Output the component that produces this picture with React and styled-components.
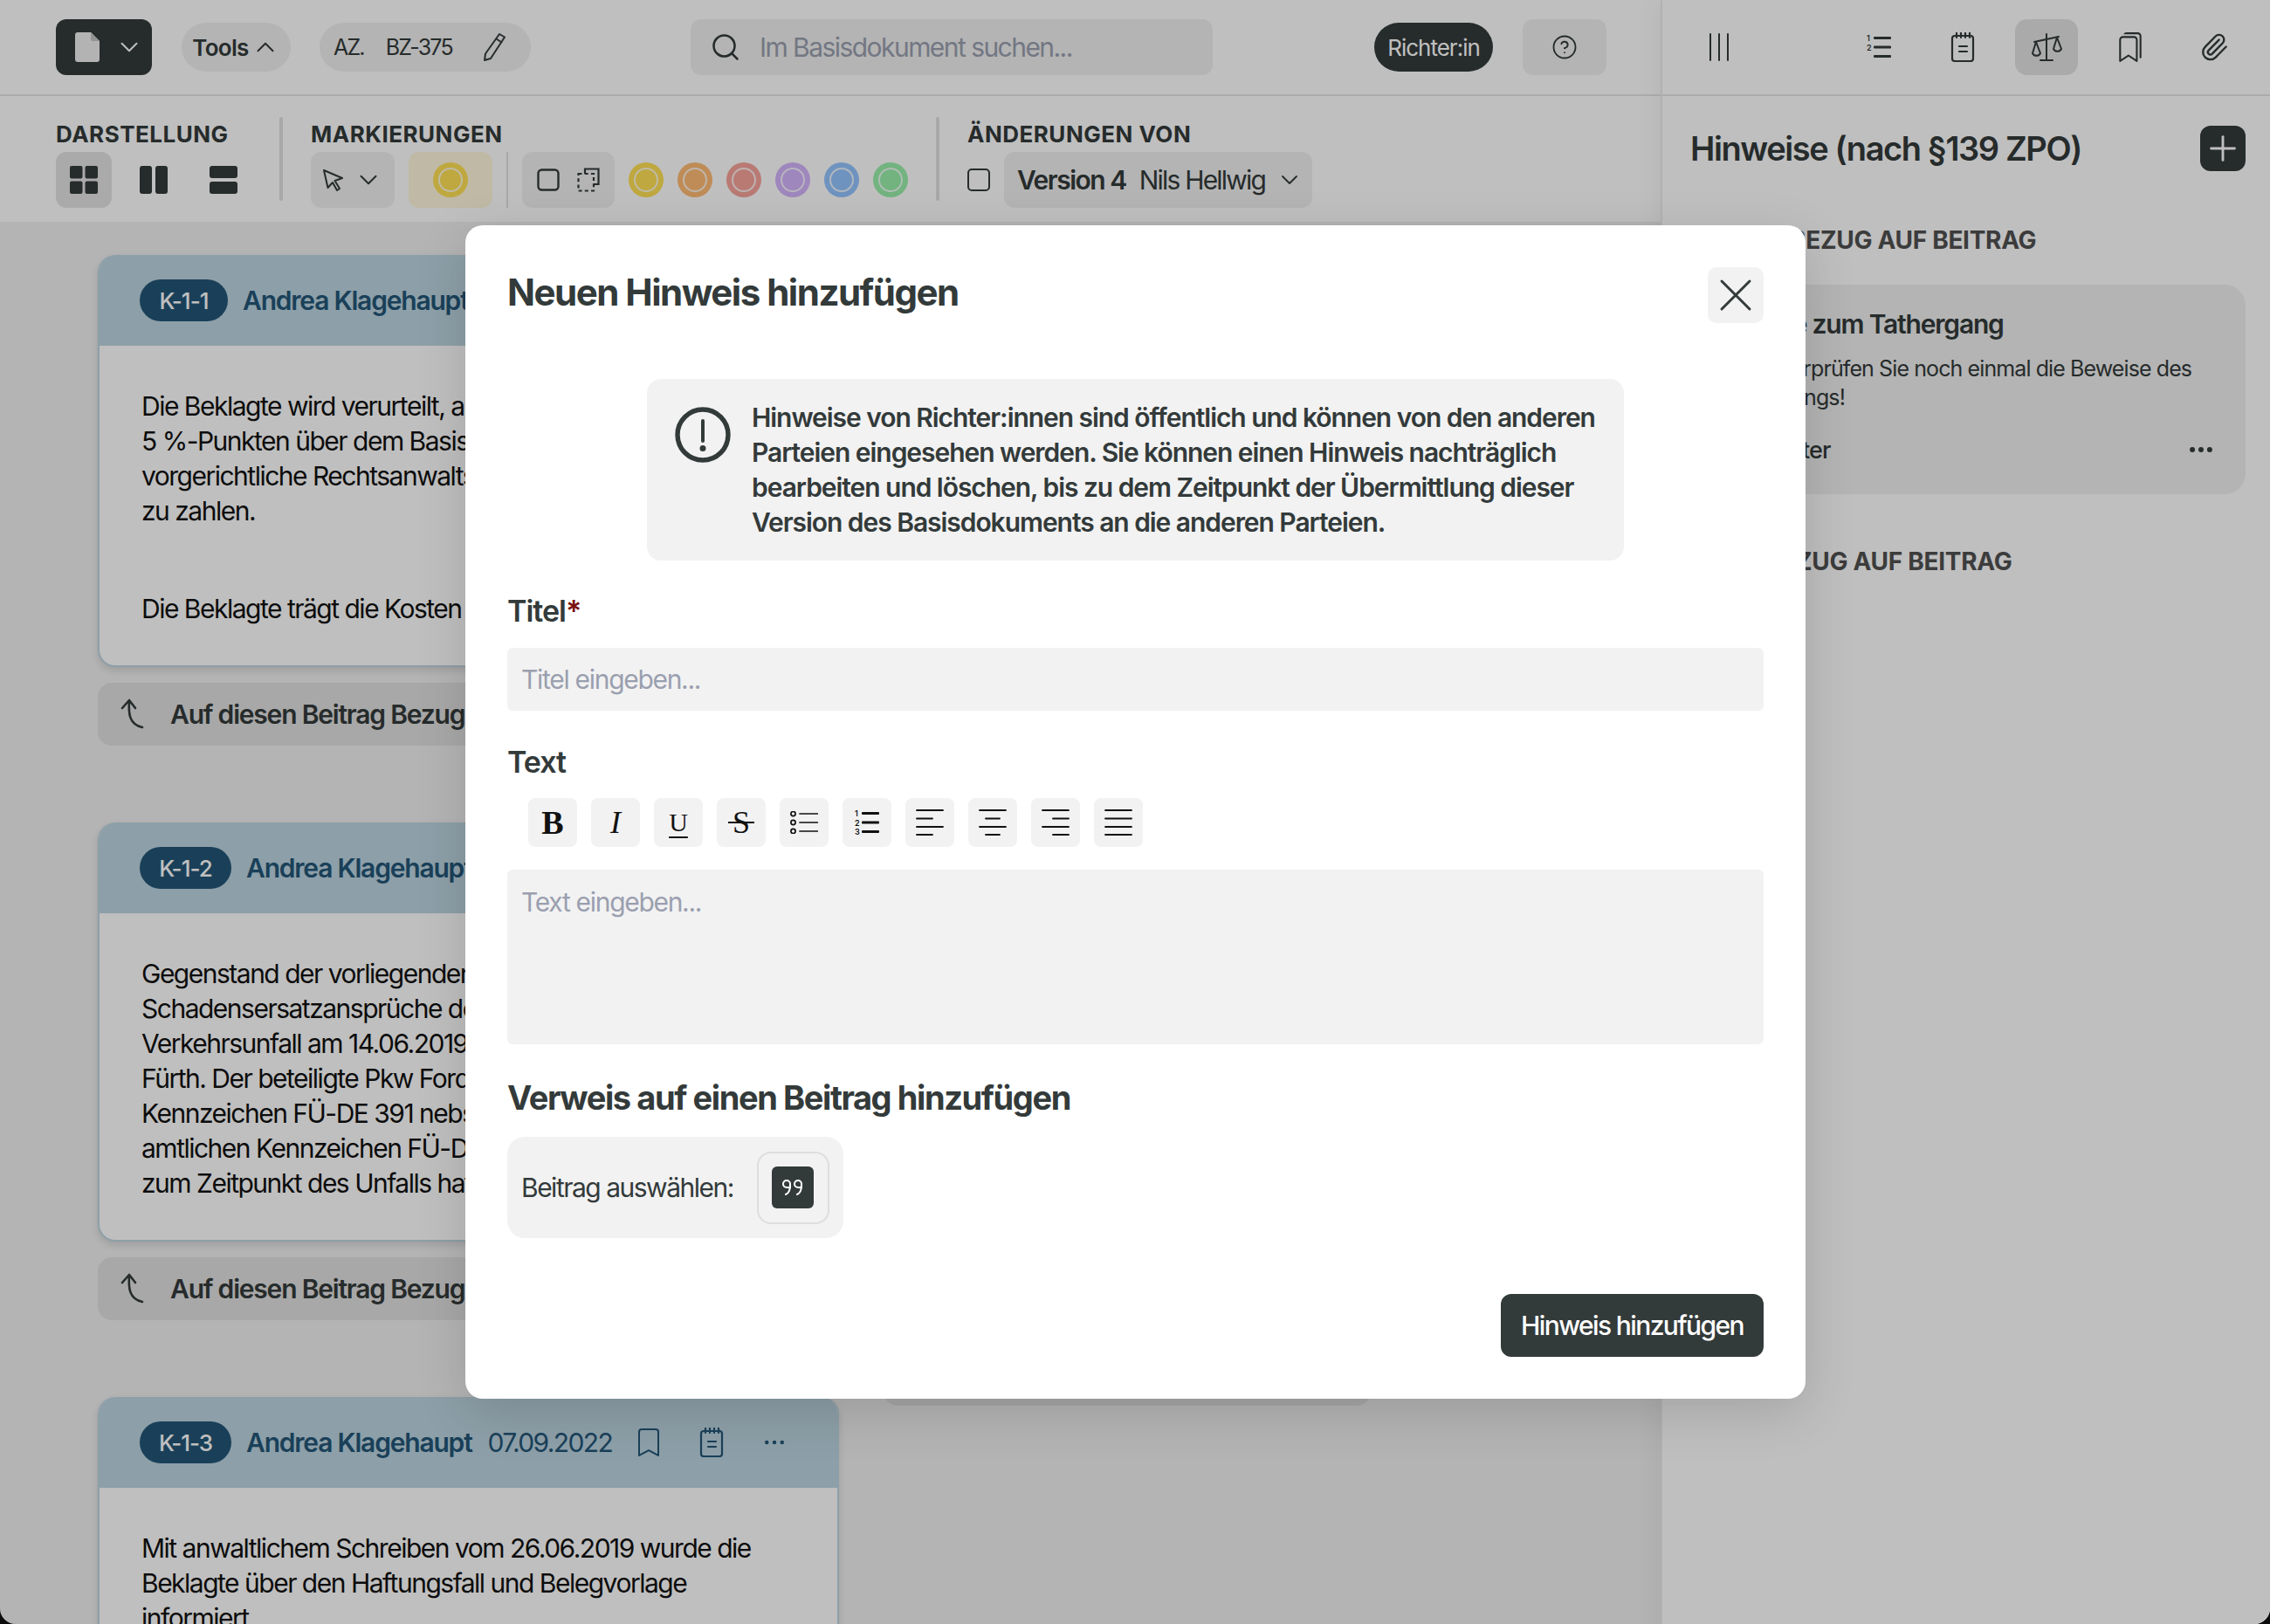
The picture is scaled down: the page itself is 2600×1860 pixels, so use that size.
import React from "react";
import styled, { createGlobalStyle } from "styled-components";
import { ChevronDown, ChevronUp, Search, CircleHelp, Plus, X, Ellipsis, Paperclip } from "lucide-react";
import { BsBookmark, BsBookmarks } from "react-icons/bs";

const GlobalStyle = createGlobalStyle`
  html, body {
    margin: 0;
    background: #0c0c0c;
  }
  body {
    font-family: "Inter", "Noto Sans", sans-serif;
    color: #333a3a;
    letter-spacing: -1px;
  }
  * { box-sizing: border-box; }
`;

const Page = styled.div`
  position: relative;
  width: 2600px;
  height: 1860px;
  overflow: hidden;
  background: #f0f0f0;
  border-radius: 0 0 18px 18px;
  display: grid;
  grid-template-columns: 1902px 698px;
`;

const LeftPane = styled.div`
  display: flex;
  flex-direction: column;
  min-width: 0;
`;

const TopBar = styled.header`
  height: 110px;
  background: #fff;
  border-bottom: 2px solid #e6e6e6;
  display: flex;
  align-items: center;
  padding-left: 64px;
`;

const LogoButton = styled.button`
  width: 110px;
  height: 64px;
  border: 0;
  border-radius: 12px;
  background: #333a3a;
  color: #fff;
  display: flex;
  align-items: center;
  padding: 0 0 0 22px;
  gap: 17px;
  svg { flex: none; }
`;

const ToolsPill = styled.button`
  width: 125px;
  height: 56px;
  margin-left: 34px;
  border: 0;
  padding: 0;
  border-radius: 28px;
  background: #f0f0f0;
  color: #333a3a;
  font: 600 26px "Inter", sans-serif;
  letter-spacing: -0.7px;
  display: flex;
  align-items: center;
  justify-content: center;
  gap: 2px;
  svg { flex: none; }
`;

const CasePill = styled.div`
  width: 242px;
  height: 56px;
  margin-left: 33px;
  border-radius: 28px;
  background: #f0f0f0;
  font-size: 25px;
  letter-spacing: -1.8px;
  white-space: nowrap;
  display: flex;
  align-items: center;
  padding-left: 16px;
  gap: 25px;
`;

const CaseEdit = styled.span`
  display: flex;
  margin-left: 8px;
`;

const SearchBox = styled.div`
  width: 598px;
  height: 64px;
  margin-left: 183px;
  border-radius: 12px;
  background: #f0f0f0;
  display: flex;
  align-items: center;
  padding-left: 22px;
  gap: 21px;
`;

const SearchInput = styled.input`
  flex: 1;
  min-width: 0;
  border: 0;
  outline: 0;
  padding: 0;
  background: transparent;
  font: 400 30px "Inter", sans-serif;
  letter-spacing: -1.55px;
  color: #333a3a;
  &::placeholder { color: #9a9faf; opacity: 1; }
`;

const RoleBadge = styled.div`
  width: 136px;
  height: 56px;
  margin-left: 185px;
  border-radius: 28px;
  background: #333a3a;
  color: #fff;
  font-size: 26px;
  display: flex;
  align-items: center;
  justify-content: center;
`;

const HelpButton = styled.button`
  width: 96px;
  height: 64px;
  margin-left: 34px;
  border: 0;
  border-radius: 12px;
  background: #f0f0f0;
  color: #333a3a;
  display: flex;
  align-items: center;
  justify-content: center;
`;

const ToolBar = styled.div`
  height: 144px;
  background: #fff;
  display: flex;
  padding: 27px 0 0 64px;
`;

const ToolSection = styled.section`
  display: flex;
  flex-direction: column;
  flex: none;
  width: ${(p) => p.$width}px;
`;

const SectionLabel = styled.div`
  height: 37px;
  font-size: 26px;
  line-height: 34px;
  font-weight: 700;
  letter-spacing: 0.5px;
  color: #333a3a;
`;

const ToolRow = styled.div`
  display: flex;
  align-items: center;
  gap: ${(p) => p.$gap || 0}px;
`;

const ToolDivider = styled.div`
  width: 4px;
  height: 96px;
  margin: -3px 32px 0 ${(p) => p.$left}px;
  border-radius: 2px;
  background: #e0e0e0;
  flex: none;
`;

const ViewButton = styled.button`
  width: 64px;
  height: 64px;
  border: 0;
  padding: 0;
  border-radius: 12px;
  background: ${(p) => (p.$active ? "#e3e3e3" : "transparent")};
  color: #333a3a;
  display: flex;
  align-items: center;
  justify-content: center;
`;

const MarkerButton = styled.button`
  width: ${(p) => p.$width || 96}px;
  height: 64px;
  margin-left: ${(p) => p.$left || 0}px;
  border: 0;
  padding: 0;
  border-radius: 12px;
  background: ${(p) => p.$bg || "#f0f0f0"};
  color: #333a3a;
  display: flex;
  align-items: center;
  justify-content: center;
  gap: ${(p) => p.$gap || 0}px;
  svg { flex: none; }
`;

const ThinDivider = styled.div`
  width: 2px;
  height: 64px;
  background: #e0e0e0;
  margin: 0 16px;
`;

const Swatches = styled.div`
  display: flex;
  gap: 16px;
  margin-left: 16px;
`;

const Swatch = styled.div`
  width: 40px;
  height: 40px;
  border-radius: 50%;
  background: ${(p) => p.$color};
  display: flex;
  align-items: center;
  justify-content: center;
  &::after {
    content: "";
    width: 24px;
    height: 24px;
    border-radius: 50%;
    border: 2px solid #ffffffcc;
  }
`;

const VersionBox = styled.span`
  width: 26px;
  height: 26px;
  border: 2.5px solid #333a3a;
  border-radius: 5px;
  flex: none;
`;

const VersionSelect = styled.div`
  width: 353px;
  height: 64px;
  margin-left: 16px;
  border-radius: 12px;
  background: #f0f0f0;
  display: flex;
  align-items: center;
  padding-left: 15px;
  font-size: 30px;
  letter-spacing: -1.8px;
  white-space: nowrap;
  strong { font-weight: 600; margin-right: 15px; letter-spacing: -1.5px; }
  svg { margin-left: 12px; flex: none; }
`;

const Main = styled.main`
  flex: 1;
  min-height: 0;
  overflow: hidden;
  display: flex;
  padding: 38px 0 0 112px;
  gap: 51px;
`;

const Column = styled.div`
  width: 849px;
  flex: none;
`;

const SideColumn = styled.div`
  width: 558px;
  flex: none;
  padding-top: 1228px;
`;

const Post = styled.article`
  background: #fff;
  border: 2px solid #bcd4e1;
  border-top: 0;
  border-radius: 20px;
  overflow: hidden;
  box-shadow: 0 4px 8px rgba(0, 0, 0, 0.12);
`;

const PostHeader = styled.div`
  height: 104px;
  background: #bcd4e1;
  display: flex;
  align-items: center;
  padding-left: 46px;
  color: #235677;
  white-space: nowrap;
`;

const PostBadge = styled.div`
  width: ${(p) => p.$width}px;
  height: 48px;
  border-radius: 24px;
  background: #235677;
  color: #fff;
  font-size: 26px;
  font-weight: 500;
  display: flex;
  align-items: center;
  justify-content: center;
`;

const PostName = styled.div`
  font-size: 30px;
  font-weight: 600;
  letter-spacing: -1.2px;
  margin-left: 17px;
`;

const PostDate = styled.div`
  font-size: 30px;
  letter-spacing: -1.6px;
  margin-left: 18px;
`;

const PostIcon = styled.span`
  display: flex;
  margin-left: ${(p) => p.$left}px;
`;

const PostBody = styled.div`
  padding: 49px 48px 45px;
  font-size: 30px;
  line-height: 40px;
  letter-spacing: -1.5px;
  color: #111;
  white-space: nowrap;
  p { margin: 0; }
  p + p { margin-top: 72px; }
`;

const ReplyBar = styled.div`
  height: 72px;
  margin: 18px 0 88px;
  border-radius: 16px;
  background: #e0e0e0;
  display: flex;
  align-items: center;
  padding-left: 26px;
  gap: 29px;
  font-size: 30px;
  font-weight: 600;
  letter-spacing: -1.2px;
  white-space: nowrap;
`;

const Sidebar = styled.aside`
  position: relative;
  background: #fff;
  border-left: 2px solid #ececec;
  box-shadow: -8px 0 24px rgba(0, 0, 0, 0.04);
  display: flex;
  flex-direction: column;
`;

const SideTopBar = styled.div`
  height: 110px;
  border-bottom: 2px solid #e6e6e6;
  display: flex;
  align-items: center;
  padding-left: 29px;
`;

const SideTab = styled.button`
  width: 72px;
  height: 64px;
  margin-left: ${(p) => p.$left || 0}px;
  border: 0;
  padding: 0;
  border-radius: 14px;
  background: ${(p) => (p.$active ? "#e3e3e3" : "transparent")};
  color: #333a3a;
  display: flex;
  align-items: center;
  justify-content: center;
`;

const SidePanel = styled.div`
  padding: 34px 28px 0 32px;
`;

const SideHead = styled.div`
  display: flex;
  align-items: center;
  justify-content: space-between;
  height: 52px;
`;

const SideTitle = styled.h2`
  margin: 0;
  font-size: 38px;
  font-weight: 600;
  letter-spacing: -1.4px;
`;

const AddButton = styled.button`
  width: 52px;
  height: 52px;
  border: 0;
  padding: 0;
  border-radius: 12px;
  background: #333a3a;
  color: #fff;
  display: flex;
  align-items: center;
  justify-content: center;
  svg { flex: none; }
`;

const GroupTitle = styled.h3`
  margin: ${(p) => p.$top}px 0 0;
  padding-left: 28px;
  font-size: 28px;
  line-height: 40px;
  font-weight: 700;
  color: #505050;
  letter-spacing: -0.3px;
`;

const NoteCard = styled.div`
  height: 240px;
  margin-top: 31px;
  border-radius: 24px;
  background: #f0f0f0;
  padding: 25px 34px 0 20px;
`;

const NoteTitle = styled.div`
  font-size: 30px;
  line-height: 40px;
  font-weight: 600;
  letter-spacing: -1.2px;
`;

const NoteText = styled.div`
  margin: 15px -10px 0 13px;
  font-size: 25px;
  line-height: 33px;
  letter-spacing: -0.9px;
`;

const NoteFooter = styled.div`
  display: flex;
  align-items: center;
  justify-content: space-between;
  margin-top: 26px;
  padding-left: 7px;
  font-size: 27px;
  font-weight: 500;
`;

const Overlay = styled.div`
  position: absolute;
  inset: 0;
  background: rgba(0, 0, 0, 0.25);
  padding: 258px 0 0 533px;
`;

const Dialog = styled.div`
  width: 1535px;
  height: 1344px;
  background: #fff;
  border-radius: 20px;
  box-shadow: 0 16px 60px rgba(0, 0, 0, 0.14);
  padding: 48px 48px 0;
`;

const DialogHead = styled.div`
  display: flex;
  align-items: center;
  justify-content: space-between;
`;

const DialogTitle = styled.h1`
  margin: 0 0 8px;
  font-size: 42px;
  font-weight: 700;
  letter-spacing: -1.5px;
`;

const CloseButton = styled.button`
  width: 64px;
  height: 64px;
  border: 0;
  padding: 0;
  border-radius: 10px;
  background: #f2f2f2;
  color: #333a3a;
  display: flex;
  align-items: center;
  justify-content: center;
  svg { flex: none; }
`;

const InfoBox = styled.div`
  width: 1119px;
  height: 208px;
  margin: 64px 0 0 160px;
  border-radius: 16px;
  background: #f2f2f2;
  padding: 24px 20px 0 32px;
  display: flex;
  gap: 24px;
  font-size: 30px;
  line-height: 40px;
  font-weight: 600;
  letter-spacing: -1.05px;
`;

const InfoIcon = styled.svg`
  width: 64px;
  height: 64px;
  flex: none;
  margin-top: 8px;
`;

const FieldLabel = styled.div`
  margin-top: ${(p) => p.$top}px;
  font-size: 34px;
  line-height: 40px;
  font-weight: 600;
  em { color: #7a1010; font-style: normal; }
`;

const TitleInput = styled.input`
  display: block;
  width: 100%;
  height: 72px;
  margin-top: 22px;
  border: 0;
  outline: 0;
  border-radius: 6px;
  background: #f2f2f2;
  padding: 0 16px;
  font: 400 30px "Inter", sans-serif;
  letter-spacing: -1.3px;
  &::placeholder { color: #9a9faf; opacity: 1; }
`;

const EditorBar = styled.div`
  display: flex;
  gap: 16px;
  margin-top: 21px;
  padding-left: 24px;
`;

const EditorButton = styled.button`
  position: relative;
  width: 56px;
  height: 56px;
  border: 0;
  padding: 0;
  border-radius: 8px;
  background: #f2f2f2;
  color: #111;
  font-family: "Liberation Serif", serif;
  font-size: ${(p) => p.$size || 32}px;
  font-weight: ${(p) => p.$weight || 400};
  font-style: ${(p) => (p.$italic ? "italic" : "normal")};
  text-decoration: ${(p) => (p.$underline ? "underline" : "none")};
  text-decoration-thickness: 2px;
  text-underline-offset: 6px;
  display: flex;
  align-items: center;
  justify-content: center;
  ${(p) =>
    p.$strike &&
    `&::after {
      content: "";
      position: absolute;
      left: 13px;
      right: 13px;
      top: 27px;
      height: 2px;
      background: #111;
    }`}
`;

const TextArea = styled.textarea`
  display: block;
  width: 100%;
  height: 200px;
  margin-top: 26px;
  border: 0;
  outline: 0;
  resize: none;
  border-radius: 6px;
  background: #f2f2f2;
  padding: 17px 16px;
  font: 400 30px/40px "Inter", sans-serif;
  letter-spacing: -1.3px;
  &::placeholder { color: #9a9faf; opacity: 1; }
`;

const SubTitle = styled.h2`
  margin: 37px 0 0;
  font-size: 38px;
  line-height: 48px;
  font-weight: 700;
  letter-spacing: -1.4px;
`;

const PickBox = styled.div`
  width: 385px;
  height: 116px;
  margin-top: 21px;
  border-radius: 20px;
  background: #f2f2f2;
  padding-left: 16px;
  display: flex;
  align-items: center;
  font-size: 30px;
  letter-spacing: -1.5px;
  white-space: nowrap;
`;

const PickButton = styled.button`
  width: 83px;
  height: 83px;
  margin-left: 27px;
  border: 2px solid #dedede;
  padding: 0;
  border-radius: 16px;
  background: #f2f2f2;
  display: flex;
  align-items: center;
  justify-content: center;
  flex: none;
`;

const QuoteChip = styled.span`
  width: 48px;
  height: 48px;
  border-radius: 6px;
  background: #333a3a;
  color: #fff;
  display: flex;
  align-items: center;
  justify-content: center;
`;

const DialogFoot = styled.div`
  display: flex;
  justify-content: flex-end;
  margin-top: 64px;
`;

const SubmitButton = styled.button`
  width: 301px;
  height: 72px;
  border: 0;
  border-radius: 12px;
  background: #333a3a;
  color: #fff;
  font: 500 30px "Inter", sans-serif;
  letter-spacing: -1.6px;
`;

const Stroke = ({ w = 32, h = 32, width = 2, children }) => (
  <svg width={w} height={h} viewBox={`0 0 ${w} ${h}`} fill="none" stroke="currentColor" strokeWidth={width} strokeLinecap="round" strokeLinejoin="round">
    {children}
  </svg>
);

const DocIcon = () => (
  <svg width="28" height="34" viewBox="0 0 28 34">
    <path d="M3 0h15l10 10v21a3 3 0 0 1-3 3H3a3 3 0 0 1-3-3V3a3 3 0 0 1 3-3z" fill="#efefef" />
    <path d="M18 0l10 10h-8a2 2 0 0 1-2-2z" fill="#c4c4c4" />
  </svg>
);

const PencilIcon = () => (
  <Stroke w={30} h={36} width={2}>
    <path d="M21 3l6 3.5L11 31l-7 2 1-7.5zM17.5 8.5l6 4" />
  </Stroke>
);

const GridIcon = () => (
  <svg width="32" height="32" viewBox="0 0 32 32" fill="currentColor">
    <rect width="14.5" height="14.5" rx="2" />
    <rect x="17.5" width="14.5" height="14.5" rx="2" />
    <rect y="17.5" width="14.5" height="14.5" rx="2" />
    <rect x="17.5" y="17.5" width="14.5" height="14.5" rx="2" />
  </svg>
);

const ColsIcon = () => (
  <svg width="32" height="32" viewBox="0 0 32 32" fill="currentColor">
    <rect width="14" height="32" rx="3" />
    <rect x="18" width="14" height="32" rx="3" />
  </svg>
);

const RowsIcon = () => (
  <svg width="32" height="32" viewBox="0 0 32 32" fill="currentColor">
    <rect width="32" height="14" rx="3" />
    <rect y="18" width="32" height="14" rx="3" />
  </svg>
);

const CursorIcon = () => (
  <Stroke w={26} h={26} width={2}>
    <path d="M2 2l21 9-8.5 3L20 23l-3 2-5-9-5.5 6z" />
  </Stroke>
);

const SelectIcon = () => (
  <Stroke w={26} h={26} width={2.4}>
    <rect x="1.5" y="1.5" width="23" height="23" rx="4" />
  </Stroke>
);

const MultiSelectIcon = () => (
  <svg width="26" height="28" viewBox="0 0 26 28" fill="none" stroke="currentColor" strokeWidth="2.2">
    <path d="M9 7V1.5h15.5V19H19" />
    <path d="M1.5 7h17.5v19.5H1.5z" strokeDasharray="4 3.2" />
  </svg>
);

const ColumnsIcon = () => (
  <Stroke w={24} h={32} width={2}>
    <path d="M2 1v30M12 1v30M22 1v30" />
  </Stroke>
);

const NoteIcon = () => (
  <Stroke w={28} h={34} width={2.2}>
    <rect x="2" y="4" width="24" height="29" rx="3" />
    <path d="M7 1v5M12 1v5M17 1v5M22 1v5M10 16h9M10 22h9" />
  </Stroke>
);

const ScaleIcon = () => (
  <Stroke w={36} h={34} width={2}>
    <path d="M18 2v29M11 32h14M4 11l28-6" />
    <path d="M6 11l-4 13a5 5 0 0 0 9 0zM30 6l-4 13a5 5 0 0 0 9 0z" />
  </Stroke>
);

const ReplyIcon = () => (
  <Stroke w={28} h={36} width={2.6}>
    <path d="M2 11L10 2l7 9M10 3c-1 14 0 27 15 30" />
  </Stroke>
);

const WarningIcon = () => (
  <InfoIcon viewBox="0 0 64 64" fill="none" stroke="currentColor" strokeWidth="5.4" strokeLinecap="round">
    <circle cx="32" cy="32" r="29" />
    <path d="M32 16v23" strokeWidth="4" />
    <circle cx="32" cy="47.5" r="2" fill="currentColor" strokeWidth="3" />
  </InfoIcon>
);

const BulletsIcon = () => (
  <Stroke w={32} h={26} width={1.7}>
    <circle cx="3.5" cy="3" r="2.6" />
    <circle cx="3.5" cy="13" r="2.6" />
    <circle cx="3.5" cy="23" r="2.6" />
    <path d="M11 3h21M11 13h21M11 23h21" />
  </Stroke>
);

const OrderedIcon = ({ digits }) => (
  <svg width="28" height="28" viewBox="0 0 28 28" fill="currentColor">
    <rect x="8" y="2" width="20" height="3" rx="1" />
    <rect x="8" y="12.5" width="20" height="3" rx="1" />
    <rect x="8" y="23" width="20" height="3" rx="1" />
    {digits.map((d, i) => (
      <text key={d} x="0" y={7 + i * 10.5} fontSize="9" fontWeight="600" fontFamily="Inter, sans-serif" letterSpacing="0">{d}</text>
    ))}
  </svg>
);

const shortLines = {
  left: "M1 10.5h18M1 29h18",
  center: "M8 10.5h16M8 29h16",
  right: "M13 10.5h18M13 29h18",
  justify: "M1 10.5h30M1 29h30",
};

const AlignIcon = ({ mode }) => (
  <Stroke w={32} h={30} width={1.8}>
    <path d={`M1 1h30M1 20h30${shortLines[mode]}`} />
  </Stroke>
);

const QuoteIcon = () => (
  <svg width="26" height="20" viewBox="0 1 26 20" fill="none" stroke="currentColor" strokeWidth="2" strokeLinecap="round">
    <path d="M10 7a4 4 0 1 0-4 4h4V7c0 7-1 10-5 12" />
    <path d="M23 7a4 4 0 1 0-4 4h4V7c0 7-1 10-5 12" />
  </svg>
);

const Header = ({ id, width }) => (
  <PostHeader>
    <PostBadge $width={width}>{id}</PostBadge>
    <PostName>Andrea Klagehaupt</PostName>
    <PostDate>07.09.2022</PostDate>
    <PostIcon $left={26}><BsBookmark size={32} /></PostIcon>
    <PostIcon $left={42}><NoteIcon /></PostIcon>
    <PostIcon $left={43}><Ellipsis size={30} strokeWidth={1.6} /></PostIcon>
  </PostHeader>
);

const Reply = () => (
  <ReplyBar>
    <ReplyIcon />
    Auf diesen Beitrag Bezug nehmen
  </ReplyBar>
);

const swatches = ["#ffe154", "#ffbb74", "#f7a39b", "#d3b4fc", "#94c4ff", "#98efab"];

export default function App() {
  return (
    <>
      <GlobalStyle />
      <Page>
        <LeftPane>
          <TopBar>
            <LogoButton>
              <DocIcon />
              <ChevronDown size={34} strokeWidth={1.4} />
            </LogoButton>
            <ToolsPill>Tools <ChevronUp size={34} strokeWidth={1.4} /></ToolsPill>
            <CasePill>
              <span>AZ.</span>
              <span>BZ-375</span>
              <CaseEdit><PencilIcon /></CaseEdit>
            </CasePill>
            <SearchBox>
              <Search size={36} strokeWidth={1.7} />
              <SearchInput placeholder="Im Basisdokument suchen..." />
            </SearchBox>
            <RoleBadge>Richter:in</RoleBadge>
            <HelpButton><CircleHelp size={30} strokeWidth={1.5} /></HelpButton>
          </TopBar>
          <ToolBar>
            <ToolSection $width={226}>
              <SectionLabel>DARSTELLUNG</SectionLabel>
              <ToolRow $gap={16}>
                <ViewButton $active><GridIcon /></ViewButton>
                <ViewButton><ColsIcon /></ViewButton>
                <ViewButton><RowsIcon /></ViewButton>
              </ToolRow>
            </ToolSection>
            <ToolDivider $left={30} />
            <ToolSection $width={714}>
              <SectionLabel>MARKIERUNGEN</SectionLabel>
              <ToolRow>
                <MarkerButton $gap={10}>
                  <CursorIcon />
                  <ChevronDown size={34} strokeWidth={1.4} />
                </MarkerButton>
                <MarkerButton $bg="#fff7dc" $left={16}>
                  <Swatch $color={swatches[0]} />
                </MarkerButton>
                <ThinDivider />
                <MarkerButton $width={106} $gap={20}>
                  <SelectIcon />
                  <MultiSelectIcon />
                </MarkerButton>
                <Swatches>
                  {swatches.map((c) => <Swatch key={c} $color={c} />)}
                </Swatches>
              </ToolRow>
            </ToolSection>
            <ToolDivider $left={2} />
            <ToolSection $width={395}>
              <SectionLabel>ÄNDERUNGEN VON</SectionLabel>
              <ToolRow>
                <VersionBox />
                <VersionSelect>
                  <strong>Version 4</strong>
                  Nils Hellwig
                  <ChevronDown size={32} strokeWidth={1.4} />
                </VersionSelect>
              </ToolRow>
            </ToolSection>
          </ToolBar>
          <Main>
            <Column>
              <Post>
                <Header id="K-1-1" width={101} />
                <PostBody>
                  <p>
                    Die Beklagte wird verurteilt, an den Kläger 4.500 € nebst Zinsen<br />
                    5 %-Punkten über dem Basiszinssatz sowie<br />
                    vorgerichtliche Rechtsanwaltskosten<br />
                    zu zahlen.
                  </p>
                  <p>Die Beklagte trägt die Kosten des Rechtsstreits.</p>
                </PostBody>
              </Post>
              <Reply />
              <Post>
                <Header id="K-1-2" width={105} />
                <PostBody>
                  <p>
                    Gegenstand der vorliegenden Klage sind<br />
                    Schadensersatzansprüche des Klägers aus einem<br />
                    Verkehrsunfall am 14.06.2019 in<br />
                    Fürth. Der beteiligte Pkw Ford<br />
                    Kennzeichen FÜ-DE 391 nebst dem<br />
                    amtlichen Kennzeichen FÜ-DE<br />
                    zum Zeitpunkt des Unfalls haftpflichtversichert.
                  </p>
                </PostBody>
              </Post>
              <Reply />
              <Post>
                <Header id="K-1-3" width={105} />
                <PostBody>
                  <p>
                    Mit anwaltlichem Schreiben vom 26.06.2019 wurde die<br />
                    Beklagte über den Haftungsfall und Belegvorlage<br />
                    informiert.
                  </p>
                </PostBody>
              </Post>
            </Column>
            <SideColumn>
              <Reply />
            </SideColumn>
          </Main>
        </LeftPane>
        <Sidebar>
          <SideTopBar>
            <SideTab><ColumnsIcon /></SideTab>
            <SideTab $left={111}><OrderedIcon digits={["1", "2"]} /></SideTab>
            <SideTab $left={24}><NoteIcon /></SideTab>
            <SideTab $left={24} $active><ScaleIcon /></SideTab>
            <SideTab $left={24}><BsBookmarks size={34} /></SideTab>
            <SideTab $left={24}><Paperclip size={34} strokeWidth={1.7} /></SideTab>
          </SideTopBar>
          <SidePanel>
            <SideHead>
              <SideTitle>Hinweise (nach §139 ZPO)</SideTitle>
              <AddButton><Plus size={46} strokeWidth={1.5} /></AddButton>
            </SideHead>
            <GroupTitle $top={59}>OHNE BEZUG AUF BEITRAG</GroupTitle>
            <NoteCard>
              <NoteTitle>Beweise zum Tathergang</NoteTitle>
              <NoteText>Bitte überprüfen Sie noch einmal die Beweise des Tathergangs!</NoteText>
              <NoteFooter>
                Der Richter
                <Ellipsis size={34} strokeWidth={2.2} />
              </NoteFooter>
            </NoteCard>
            <GroupTitle $top={57}>MIT BEZUG AUF BEITRAG</GroupTitle>
          </SidePanel>
        </Sidebar>
        <Overlay>
          <Dialog>
            <DialogHead>
              <DialogTitle>Neuen Hinweis hinzufügen</DialogTitle>
              <CloseButton><X size={64} strokeWidth={1.1} /></CloseButton>
            </DialogHead>
            <InfoBox>
              <WarningIcon />
              <div>
                Hinweise von Richter:innen sind öffentlich und können von den anderen Parteien eingesehen werden. Sie können einen Hinweis nachträglich bearbeiten und löschen, bis zu dem Zeitpunkt der Übermittlung dieser Version des Basisdokuments an die anderen Parteien.
              </div>
            </InfoBox>
            <FieldLabel $top={38}>Titel<em>*</em></FieldLabel>
            <TitleInput placeholder="Titel eingeben..." />
            <FieldLabel $top={39}>Text</FieldLabel>
            <EditorBar>
              <EditorButton $weight={700} $size={38}>B</EditorButton>
              <EditorButton $italic $size={36}>I</EditorButton>
              <EditorButton $underline $size={30}>U</EditorButton>
              <EditorButton $strike $size={36}>S</EditorButton>
              <EditorButton><BulletsIcon /></EditorButton>
              <EditorButton><OrderedIcon digits={["1", "2", "3"]} /></EditorButton>
              <EditorButton><AlignIcon mode="left" /></EditorButton>
              <EditorButton><AlignIcon mode="center" /></EditorButton>
              <EditorButton><AlignIcon mode="right" /></EditorButton>
              <EditorButton><AlignIcon mode="justify" /></EditorButton>
            </EditorBar>
            <TextArea placeholder="Text eingeben..." />
            <SubTitle>Verweis auf einen Beitrag hinzufügen</SubTitle>
            <PickBox>
              Beitrag auswählen:
              <PickButton><QuoteChip><QuoteIcon /></QuoteChip></PickButton>
            </PickBox>
            <DialogFoot>
              <SubmitButton>Hinweis hinzufügen</SubmitButton>
            </DialogFoot>
          </Dialog>
        </Overlay>
      </Page>
    </>
  );
}
